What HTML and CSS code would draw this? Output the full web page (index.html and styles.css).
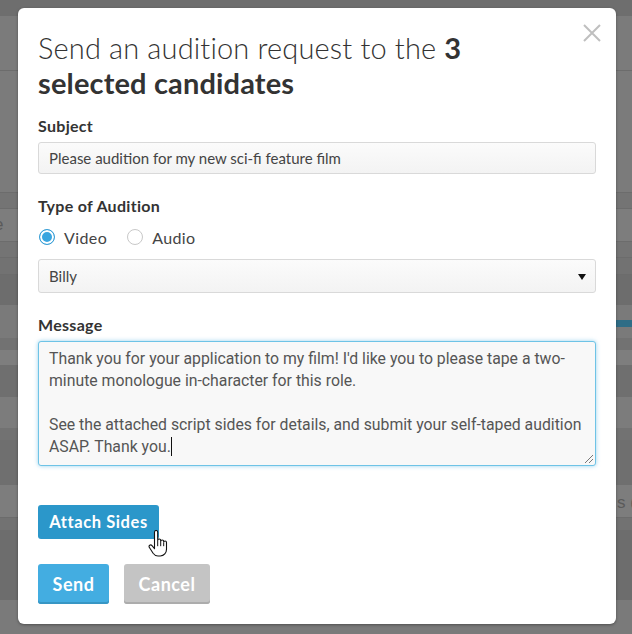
FILE: index.html
```html
<!DOCTYPE html>
<html>
<head>
<meta charset="utf-8">
<link rel="stylesheet" href="styles.css">
</head>
<body>
<div class="page">
  <div class="row r-top"></div>
  <div class="row r-head"></div>
  <div class="row r-a"></div>
  <div class="row r-b"></div>
  <div class="row r-c"><span class="edge-text">e</span></div>
  <div class="row r-b"></div>
  <div class="row r-d"></div>
  <div class="row r-e"></div>
  <div class="row r-f"><div class="bluebar"></div></div>
  <div class="row r-g"></div>
  <div class="row r-h"></div>
  <div class="row r-i"></div>
  <div class="row r-h2"></div>
  <div class="row r-g"></div>
  <div class="row r-i2"></div>
  <div class="row r-j"><span class="edge-text right">s (</span></div>
  <div class="row r-g"></div>
  <div class="row r-k"></div>
  <div class="row r-l"></div>
</div>

<div class="modal">
  <button class="close" aria-label="Close">
    <svg width="20" height="20" viewBox="0 0 20 20"><path d="M2 2 L18 18 M18 2 L2 18" stroke="#bfbfbf" stroke-width="2" fill="none"/></svg>
  </button>
  <h1 class="title">Send an audition request to the <b>3 selected candidates</b></h1>

  <div class="field">
    <label class="label">Subject</label>
    <div class="input">Please audition for my new sci-fi feature film</div>
  </div>

  <div class="field">
    <label class="label">Type of Audition</label>
    <div class="radios">
      <span class="radio checked"></span><span class="radio-label">Video</span>
      <span class="radio"></span><span class="radio-label">Audio</span>
    </div>
    <div class="input select">Billy<span class="caret"></span></div>
  </div>

  <div class="field">
    <label class="label">Message</label>
    <div class="textarea">Thank you for your application to my film! I'd like you to please tape a two-<br>minute monologue in-character for this role.<br><br>See the attached script sides for details, and submit your self-taped audition<br>ASAP. Thank you.<span class="text-caret"></span><span class="grip"></span></div>
  </div>

  <div class="attach-wrap">
    <button class="btn btn-attach">Attach Sides</button>
    <svg class="hand" width="20" height="28" viewBox="0 0 20 28">
      <path d="M6.5 2.2c0-1 .7-1.7 1.6-1.7s1.6.7 1.6 1.7v8.3c0-.9.7-1.5 1.5-1.5s1.5.7 1.5 1.5v.9c0-.8.7-1.4 1.5-1.4s1.5.6 1.5 1.4v.9c0-.8.6-1.3 1.4-1.3s1.4.6 1.4 1.4v6.8c0 3.7-2.5 6.8-6.2 6.8H10c-2.2 0-3.6-1-4.9-2.8L1.4 17.5c-.6-.8-.4-1.8.3-2.3.8-.5 1.7-.3 2.3.4l2.5 3.1V2.2z" fill="#fff" stroke="#111" stroke-width="1.1" stroke-linejoin="round"/>
      <path d="M9.7 11v5.2M12.7 12v4.2M15.7 12.8v3.4" stroke="#111" stroke-width="1" fill="none"/>
    </svg>
  </div>

  <div class="actions">
    <button class="btn btn-send">Send</button>
    <button class="btn btn-cancel">Cancel</button>
  </div>
</div>
</body>
</html>
```
FILE: styles.css
```css
html, body {
  margin: 0;
  padding: 0;
}
body {
  width: 632px;
  height: 634px;
  overflow: hidden;
  background: #7a7a7a;
  font-family: Lato, "Liberation Sans", sans-serif;
  position: relative;
}
.page {
  display: flex;
  flex-direction: column;
}
.row {
  box-sizing: border-box;
  border-bottom: 1px solid #6c6c6c;
  position: relative;
  flex: none;
}
.r-top { height: 16px; background: #6e6e6e; border: 0; }
.r-head { height: 55px; background: #7b7b7b; }
.r-a { height: 122px; background: #7b7b7b; }
.r-b { height: 16px; background: #747474; }
.r-c { height: 33px; background: #7d7d7d; }
.r-d { height: 17px; background: #727272; }
.r-e { height: 30px; background: #6d6d6d; border: 0; }
.r-f { height: 33px; background: #7a7a7a; border: 0; }
.r-g { height: 12px; background: #727272; border: 0; }
.r-h { height: 15px; background: #7e7e7e; border: 0; }
.r-i { height: 32px; background: #6f6f6f; border: 0; }
.r-h2 { height: 31px; background: #7c7c7c; border: 0; }
.r-i2 { height: 45px; background: #6f6f6f; border: 0; }
.r-j { height: 33px; background: #7d7d7d; }
.r-k { height: 70px; background: #6d6d6d; border: 0; }
.r-l { height: 34px; background: #7a7a7a; border: 0; }
.bluebar {
  position: absolute;
  right: 0;
  top: 15px;
  width: 20px;
  height: 7px;
  background: #2f6d86;
}
.edge-text {
  position: absolute;
  left: -6px;
  top: 6px;
  font-family: "Liberation Sans", sans-serif;
  font-size: 17px;
  color: #5a5a5a;
}
.edge-text.right {
  left: auto;
  right: -4px;
  top: 8px;
}

.modal {
  position: absolute;
  left: 18px;
  top: 8px;
  width: 598px;
  height: 616px;
  box-sizing: border-box;
  background: #fff;
  border-radius: 6px;
  box-shadow: 0 1px 3px rgba(0,0,0,0.35);
  padding: 22px 20px 0 20px;
}
.close {
  position: absolute;
  right: 14px;
  top: 15px;
  border: 0;
  background: none;
  padding: 0;
  width: 20px;
  height: 20px;
}
.close svg { display: block; }
.title {
  margin: 0 0 16px 0;
  font-size: 29px;
  line-height: 35px;
  font-weight: 300;
  letter-spacing: 0.15px;
  color: #333;
  padding-right: 110px;
}
.title b {
  font-weight: 700;
}
.field {
  margin-bottom: 22px;
}
.label {
  display: block;
  font-weight: 700;
  font-size: 16px;
  letter-spacing: 0.3px;
  line-height: 20px;
  color: #333;
  margin-bottom: 6px;
}
.input {
  height: 32px;
  box-sizing: border-box;
  border: 1px solid #d9d9d9;
  border-radius: 3px;
  background: linear-gradient(#fbfbfb, #f3f3f3);
  padding: 0 10px;
  font-size: 15px;
  line-height: 30px;
  color: #444;
}
.radios {
  display: flex;
  align-items: center;
  height: 22px;
  margin-top: 10px;
  margin-bottom: 11px;
}
.radio {
  width: 16px;
  height: 16px;
  box-sizing: border-box;
  border: 1px solid #c8c8c8;
  border-radius: 50%;
  background: #fff;
  margin-left: 1px;
}
.radio.checked {
  border-color: #3a9fd6;
  background: #3aa5df;
  box-shadow: inset 0 0 0 2px #fff;
  border-width: 1.5px;
}
.radio-label {
  font-size: 16px;
  letter-spacing: 0.4px;
  color: #444;
  margin-left: 9px;
  margin-right: 19px;
}
.select {
  height: 34px;
  line-height: 32px;
  position: relative;
}
.caret {
  position: absolute;
  right: 9px;
  top: 14px;
  width: 0;
  height: 0;
  border-left: 4px solid transparent;
  border-right: 4px solid transparent;
  border-top: 6px solid #111;
}
.textarea {
  position: relative;
  height: 125px;
  box-sizing: border-box;
  border: 1px solid #6ec3e6;
  border-radius: 3px;
  box-shadow: 0 0 4px rgba(88, 180, 225, 0.6);
  background: #f8f8f8;
  padding: 6px 10px;
  font-family: Roboto, "Liberation Sans", sans-serif;
  font-size: 15.8px;
  line-height: 22px;
  color: #555;
}
.text-caret {
  display: inline-block;
  width: 1px;
  height: 19px;
  background: #111;
  vertical-align: -4px;
}
.grip {
  position: absolute;
  right: 2px;
  bottom: 2px;
  width: 8px;
  height: 8px;
  background: linear-gradient(135deg, transparent 45%, #777 45%, #777 52%, transparent 52%, transparent 70%, #777 70%, #777 77%, transparent 77%);
}
.attach-wrap {
  margin-top: 39px;
  position: relative;
  height: 34px;
}
.btn {
  border: 0;
  border-radius: 3px;
  color: #fff;
  font-family: Lato, "Liberation Sans", sans-serif;
  font-weight: 700;
  cursor: pointer;
}
.btn-attach {
  height: 34px;
  width: 121px;
  padding: 0;
  font-size: 16.5px;
  letter-spacing: 0.6px;
  background: #2b97ca;
}
.hand {
  position: absolute;
  left: 110px;
  top: 25px;
}
.actions {
  margin-top: 25px;
  display: flex;
  gap: 15px;
}
.btn-send, .btn-cancel {
  height: 40px;
  padding: 0;
  font-size: 18px;
  letter-spacing: 0.5px;
}
.btn-send {
  width: 71px;
  background: #43ade1;
  box-shadow: inset 0 -2px 0 #3796c4;
}
.btn-cancel {
  width: 86px;
  background: #c4c4c4;
  box-shadow: inset 0 -2px 0 #acacac;
}
```
